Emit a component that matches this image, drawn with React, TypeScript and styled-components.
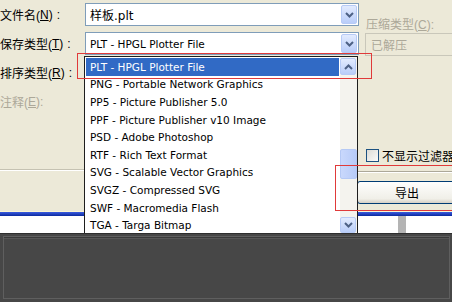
import styled, { createGlobalStyle } from "styled-components"

const GlobalStyle = createGlobalStyle`
	html, body {
		margin: 0;
		padding: 0;
		background: #474747;
	}
	body {
		font-family: "Liberation Sans", "Noto Sans CJK SC", sans-serif;
		font-size: 11px;
		color: #000;
	}
`

const listFont = `"DejaVu Sans", "Noto Sans CJK SC", sans-serif`

const Screen = styled.div`
	width: 452px;
	height: 302px;
	overflow: hidden;
	display: grid;
	grid-template-rows: 233px 69px;
`

const Dialog = styled.div`
	position: relative;
	display: grid;
	grid-template-columns: 84px 274px 94px;
	grid-template-rows: 211px 5px 17px;
	background: #ece9d8;
	overflow: hidden;
`

const LabelColumn = styled.div`
	display: flex;
	flex-direction: column;
`

const Label = styled.div<{ $disabled?: boolean }>`
	height: 29px;
	display: flex;
	align-items: center;
	font-size: 12px;
	white-space: nowrap;
	color: ${p => (p.$disabled ? "#aca899" : "#000")};
`

const Colon = styled.span`
	margin-left: 4px;
`

const Divider = styled.div<{ $top: number }>`
	margin-top: ${p => p.$top}px;
	height: 1px;
	background: #c5c2b2;
	border-bottom: 1px solid #fff;
`

const Fields = styled.div`
	display: flex;
	flex-direction: column;
	gap: 6px;
	padding: 3px 0 0 1px;
`

const Combo = styled.div`
	width: 271px;
	height: 21px;
	box-sizing: content-box;
	border: 1px solid #7f9db9;
	background: #fff;
	display: flex;
	align-items: center;
	justify-content: space-between;
	padding-right: 1px;
`

const ComboText = styled.span<{ $cjk?: boolean }>`
	padding-left: 4px;
	font-family: ${listFont};
	font-size: ${p => (p.$cjk ? "12px" : "10.5px")};
`

const ArrowButton = styled.div<{ $height?: number }>`
	width: 16px;
	height: ${p => p.$height ?? 19}px;
	box-sizing: border-box;
	border: 1px solid #b7cbf6;
	border-radius: 2px;
	background: linear-gradient(#e2ebfe, #b9cdf9);
	display: flex;
	align-items: center;
	justify-content: center;
`

const SidePanel = styled.div`
	display: flex;
	flex-direction: column;
`

const SideLabel = styled.div`
	margin: 15px 0 0 8px;
	height: 15px;
	font-size: 12px;
	color: #aca899;
	white-space: nowrap;
`

const DisabledCombo = styled.div`
	margin: 3px 0 0 7px;
	height: 21px;
	border: 1px solid #c9c7ba;
	border-right: none;
	display: flex;
	align-items: center;
	padding-left: 5px;
	font-size: 12px;
	color: #aca899;
`

const CheckRow = styled.label`
	margin: 91px 0 0 8px;
	display: flex;
	align-items: center;
	gap: 3px;
	font-size: 12px;
	white-space: nowrap;
`

const CheckBox = styled.span`
	width: 13px;
	height: 13px;
	flex: none;
	box-sizing: border-box;
	border: 1px solid #1c5180;
	background: linear-gradient(135deg, #dcdcd6, #fbfbf9);
`

const SideRule = styled.div`
	margin-top: 7px;
	height: 1px;
	background: #aca899;
	border-bottom: 1px solid #fff;
`

const ExportButton = styled.div`
	margin: 8px 0 0 -1px;
	width: 100px;
	height: 23px;
	box-sizing: border-box;
	border: 1px solid #003c74;
	border-radius: 3px;
	background: linear-gradient(#fefefd, #f0efe8 80%, #d6d0c5);
	display: flex;
	align-items: center;
	justify-content: center;
	font-size: 12px;
`

const BlueLine = styled.div`
	grid-column: 1 / -1;
	border-top: 1px solid #fbf6d2;
	background: linear-gradient(#3a5ce0, #0c2a9e);
`

const WhiteStrip = styled.div`
	grid-column: 1 / -1;
	background: #fff;
	display: flex;
`

const GreyBar = styled.div`
	margin-left: 398px;
	width: 8px;
	background: #b4b4b4;
`

const DropList = styled.div`
	position: absolute;
	left: 84px;
	top: 56px;
	width: 274px;
	height: 178px;
	box-sizing: border-box;
	border: 1px solid #1e1e1e;
	border-bottom: none;
	background: #fff;
	display: grid;
	grid-template-columns: 1fr 17px;
`

const Items = styled.div`
	padding: 1px 1px 0 1px;
`

const Item = styled.div<{ $selected?: boolean }>`
	height: 17.6px;
	display: flex;
	align-items: center;
	padding-left: 4px;
	white-space: nowrap;
	overflow: hidden;
	font-family: ${listFont};
	font-size: 10.5px;
	color: ${p => (p.$selected ? "#fff" : "#000")};
	background: ${p => (p.$selected ? "#316ac5" : "transparent")};
`

const ScrollTrack = styled.div`
	display: flex;
	flex-direction: column;
	background: #f4f3ee;
	padding-top: 1px;
`

const ScrollThumb = styled.div`
	margin-top: 74px;
	height: 30px;
	box-sizing: border-box;
	border: 1px solid #b5c9f5;
	border-radius: 2px;
	background: linear-gradient(90deg, #c9d8fc, #b7cbf8);
`

const ScrollDown = styled.div`
	margin-top: auto;
	margin-bottom: 1px;
`

const Annotation = styled.div<{ $x: number; $y: number; $w: number; $h: number }>`
	position: absolute;
	left: ${p => p.$x}px;
	top: ${p => p.$y}px;
	width: ${p => p.$w}px;
	height: ${p => p.$h}px;
	box-sizing: border-box;
	border: 1.5px solid #e03a3a;
	pointer-events: none;
`

const DarkBar = styled.div`
	background: #474747;
	border-top: 1px solid #2e2e2e;
	padding: 2px 2px 3px 3px;
	display: flex;
`

const DarkFrame = styled.div`
	flex: 1;
	border: 1px solid #5f5f5f;
	box-shadow: inset 0 1px 0 #3a3a3a, inset 0 2px 0 #565656;
`

function Chevron({ up }: { up?: boolean }) {
	return (
		<svg width="9" height="6" viewBox="0 0 9 6">
			<polyline
				points={up ? "1,5 4.5,1.5 8,5" : "1,1 4.5,4.5 8,1"}
				fill="none"
				stroke="#4d6185"
				strokeWidth="2"
			/>
		</svg>
	)
}

const formats = [
	"PLT - HPGL Plotter File",
	"PNG - Portable Network Graphics",
	"PP5 - Picture Publisher 5.0",
	"PPF - Picture Publisher v10 Image",
	"PSD - Adobe Photoshop",
	"RTF - Rich Text Format",
	"SVG - Scalable Vector Graphics",
	"SVGZ - Compressed SVG",
	"SWF - Macromedia Flash",
	"TGA - Targa Bitmap",
]

export default function App() {
	return (
		<>
			<GlobalStyle />
			<Screen>
				<Dialog>
					<LabelColumn>
						<Label>文件名(<u>N</u>)<Colon>:</Colon></Label>
						<Label>保存类型(<u>T</u>)<Colon>:</Colon></Label>
						<Label>排序类型(<u>R</u>)<Colon>:</Colon></Label>
						<Label $disabled>注释(<u>E</u>):</Label>
						<Divider $top={53} />
					</LabelColumn>

					<Fields>
						<Combo>
							<ComboText $cjk>样板.plt</ComboText>
							<ArrowButton><Chevron /></ArrowButton>
						</Combo>
						<Combo>
							<ComboText>PLT - HPGL Plotter File</ComboText>
							<ArrowButton><Chevron /></ArrowButton>
						</Combo>
					</Fields>

					<SidePanel>
						<SideLabel>压缩类型(<u>C</u>):</SideLabel>
						<DisabledCombo>已解压</DisabledCombo>
						<CheckRow>
							<CheckBox />
							不显示过滤器
						</CheckRow>
						<SideRule />
						<ExportButton>导出</ExportButton>
					</SidePanel>

					<BlueLine />
					<WhiteStrip>
						<GreyBar />
					</WhiteStrip>

					<DropList>
						<Items>
							{formats.map((f, i) => (
								<Item key={f} $selected={i === 0}>{f}</Item>
							))}
						</Items>
						<ScrollTrack>
							<ArrowButton $height={17}><Chevron up /></ArrowButton>
							<ScrollThumb />
							<ScrollDown>
								<ArrowButton $height={16}><Chevron /></ArrowButton>
							</ScrollDown>
						</ScrollTrack>
					</DropList>

					<Annotation $x={77} $y={53} $w={295} $h={26} />
					<Annotation $x={335} $y={165} $w={120} $h={46} />
				</Dialog>
				<DarkBar>
					<DarkFrame />
				</DarkBar>
			</Screen>
		</>
	)
}
